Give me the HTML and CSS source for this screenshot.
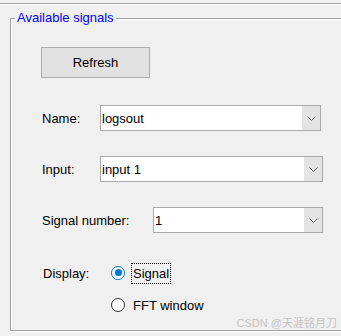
FILE: index.html
```html
<!DOCTYPE html>
<html>
<head>
<meta charset="utf-8">
<link rel="stylesheet" href="styles.css">
</head>
<body>
<div class="topline"></div>
<div class="group">
  <span class="legend">Available signals</span>
  <div class="btn">Refresh</div>
  <div class="rows">
    <div class="row">
      <span class="lbl w-name">Name:</span>
      <div class="combo w221"><span class="val">logsout</span><span class="arrow"><svg width="9" height="5" viewBox="0 0 9 5"><path d="M0.5 0.5 L4.5 4.5 L8.5 0.5" fill="none" stroke="#606060" stroke-width="1"/></svg></span></div>
    </div>
    <div class="row">
      <span class="lbl w-name">Input:</span>
      <div class="combo w223"><span class="val">input 1</span><span class="arrow"><svg width="9" height="5" viewBox="0 0 9 5"><path d="M0.5 0.5 L4.5 4.5 L8.5 0.5" fill="none" stroke="#606060" stroke-width="1"/></svg></span></div>
    </div>
    <div class="row">
      <span class="lbl w-num">Signal number:</span>
      <div class="combo w170"><span class="val">1</span><span class="arrow"><svg width="9" height="5" viewBox="0 0 9 5"><path d="M0.5 0.5 L4.5 4.5 L8.5 0.5" fill="none" stroke="#606060" stroke-width="1"/></svg></span></div>
    </div>
  </div>
  <div class="display">
    <span class="lbl-d">Display:</span>
    <div class="radios">
      <div class="radio"><span class="circle on"><span class="dot"></span></span><span class="rtext focus">Signal</span></div>
      <div class="radio"><span class="circle"></span><span class="rtext">FFT window</span></div>
    </div>
  </div>
</div>
<div class="wm">CSDN @天涯铭月刀</div>
</body>
</html>
```
FILE: styles.css
```css
html, body {
  margin: 0;
  padding: 0;
}
body {
  width: 341px;
  height: 336px;
  overflow: hidden;
  background: #f0f0f0;
  font-family: "Liberation Sans", Arial, sans-serif;
  font-size: 13px;
  color: #000;
  position: relative;
}
.topline {
  margin-top: 3px;
  border-top: 1px solid #a0a0a0;
  border-bottom: 1px solid #ffffff;
}
.group {
  position: relative;
  box-sizing: border-box;
  margin-top: 13px;
  margin-left: 10px;
  width: 345px;
  height: 313px;
  border: 1px solid #a0a0a0;
  box-shadow: inset 1px 1px 0 #ffffff, 0 1px 0 #ffffff;
  padding: 28px 0 0 30px;
}
.legend {
  position: absolute;
  left: 4px;
  top: -9px;
  padding: 0 2px;
  line-height: 16px;
  background: #f0f0f0;
  color: #0000ff;
}
.btn {
  box-sizing: border-box;
  width: 109px;
  height: 31px;
  border: 1px solid #adadad;
  background: #e1e1e1;
  display: flex;
  align-items: center;
  justify-content: center;
}
.rows {
  margin-top: 27px;
  padding-left: 1px;
  display: flex;
  flex-direction: column;
  gap: 25px;
}
.row {
  display: flex;
  align-items: center;
  height: 26px;
}
.lbl {
  flex: none;
}
.w-name { width: 58px; }
.w-num { width: 111px; }
.combo {
  box-sizing: border-box;
  height: 26px;
  border: 1px solid #a9a9a9;
  background: #ffffff;
  display: flex;
  align-items: stretch;
}
.w221 { width: 221px; }
.w223 { width: 223px; }
.w170 { width: 170px; }
.val {
  flex: 1;
  padding-left: 1px;
  display: flex;
  align-items: center;
}
.arrow {
  width: 18px;
  background: #e3e3e3;
  display: flex;
  align-items: center;
  justify-content: center;
}
.display {
  margin-top: 30px;
  padding-left: 2px;
  display: flex;
  align-items: flex-start;
}
.lbl-d {
  width: 68px;
  line-height: 21px;
  margin-top: 0;
}
.radios {
  display: flex;
  flex-direction: column;
  gap: 11px;
}
.radio {
  display: flex;
  align-items: center;
  height: 21px;
}
.circle {
  box-sizing: border-box;
  width: 14px;
  height: 14px;
  border: 1px solid #333333;
  border-radius: 50%;
  background: #ffffff;
  display: flex;
  align-items: center;
  justify-content: center;
  margin-right: 6px;
  margin-top: -2px;
}
.circle.on {
  border: 1.5px solid #0078d7;
}
.dot {
  width: 7px;
  height: 7px;
  border-radius: 50%;
  background: #0078d7;
}
.rtext {
  padding: 0 1px;
  border: 1px dotted transparent;
  line-height: 19px;
}
.rtext.focus {
  border-color: #000000;
}
.wm {
  position: absolute;
  right: 4px;
  top: 316px;
  font-family: "Liberation Sans", "Noto Sans CJK SC", sans-serif;
  font-size: 11px;
  line-height: 14px;
  color: #c4c4c4;
}
```
